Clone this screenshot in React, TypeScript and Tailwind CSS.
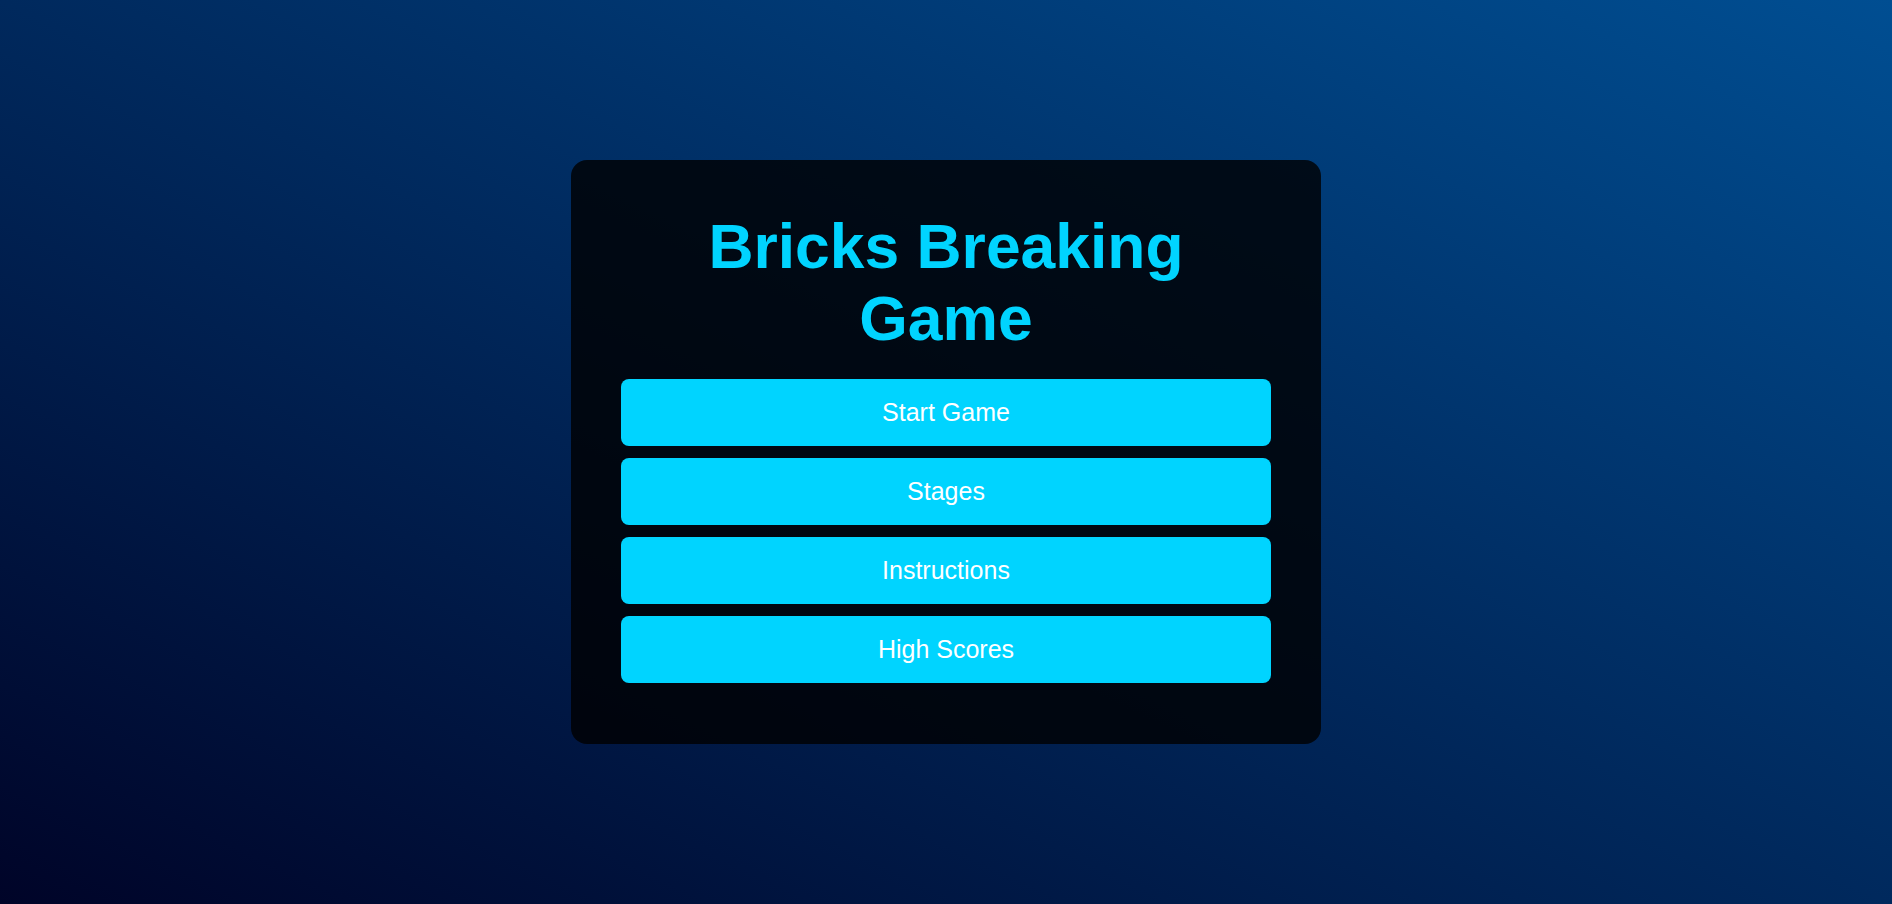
export default function App() {
  const items = ["Start Game", "Stages", "Instructions", "High Scores"];

  return (
    <div
      className="flex h-[904px] w-full items-center justify-center bg-[linear-gradient(to_top_right,#000428,#004e92)]"
      style={{ fontFamily: '"Liberation Sans", Arial, sans-serif' }}
    >
      {/* Menu card */}
      <div className="w-[750px] rounded-2xl bg-black/80 px-[50px] pt-[51px] pb-[61px]">
        <h1 className="mb-[25px] text-center text-[62.4px] font-bold leading-[71.7px] text-[#00d4ff]">
          Bricks Breaking
          <br />
          Game
        </h1>

        <div className="flex flex-col gap-[12px]">
          {items.map((label) => (
            <button
              key={label}
              className="h-[67px] w-full rounded-lg bg-[#00d4ff] text-[25px] text-white hover:bg-[#00b8e0]"
            >
              {label}
            </button>
          ))}
        </div>
      </div>
    </div>
  );
}
